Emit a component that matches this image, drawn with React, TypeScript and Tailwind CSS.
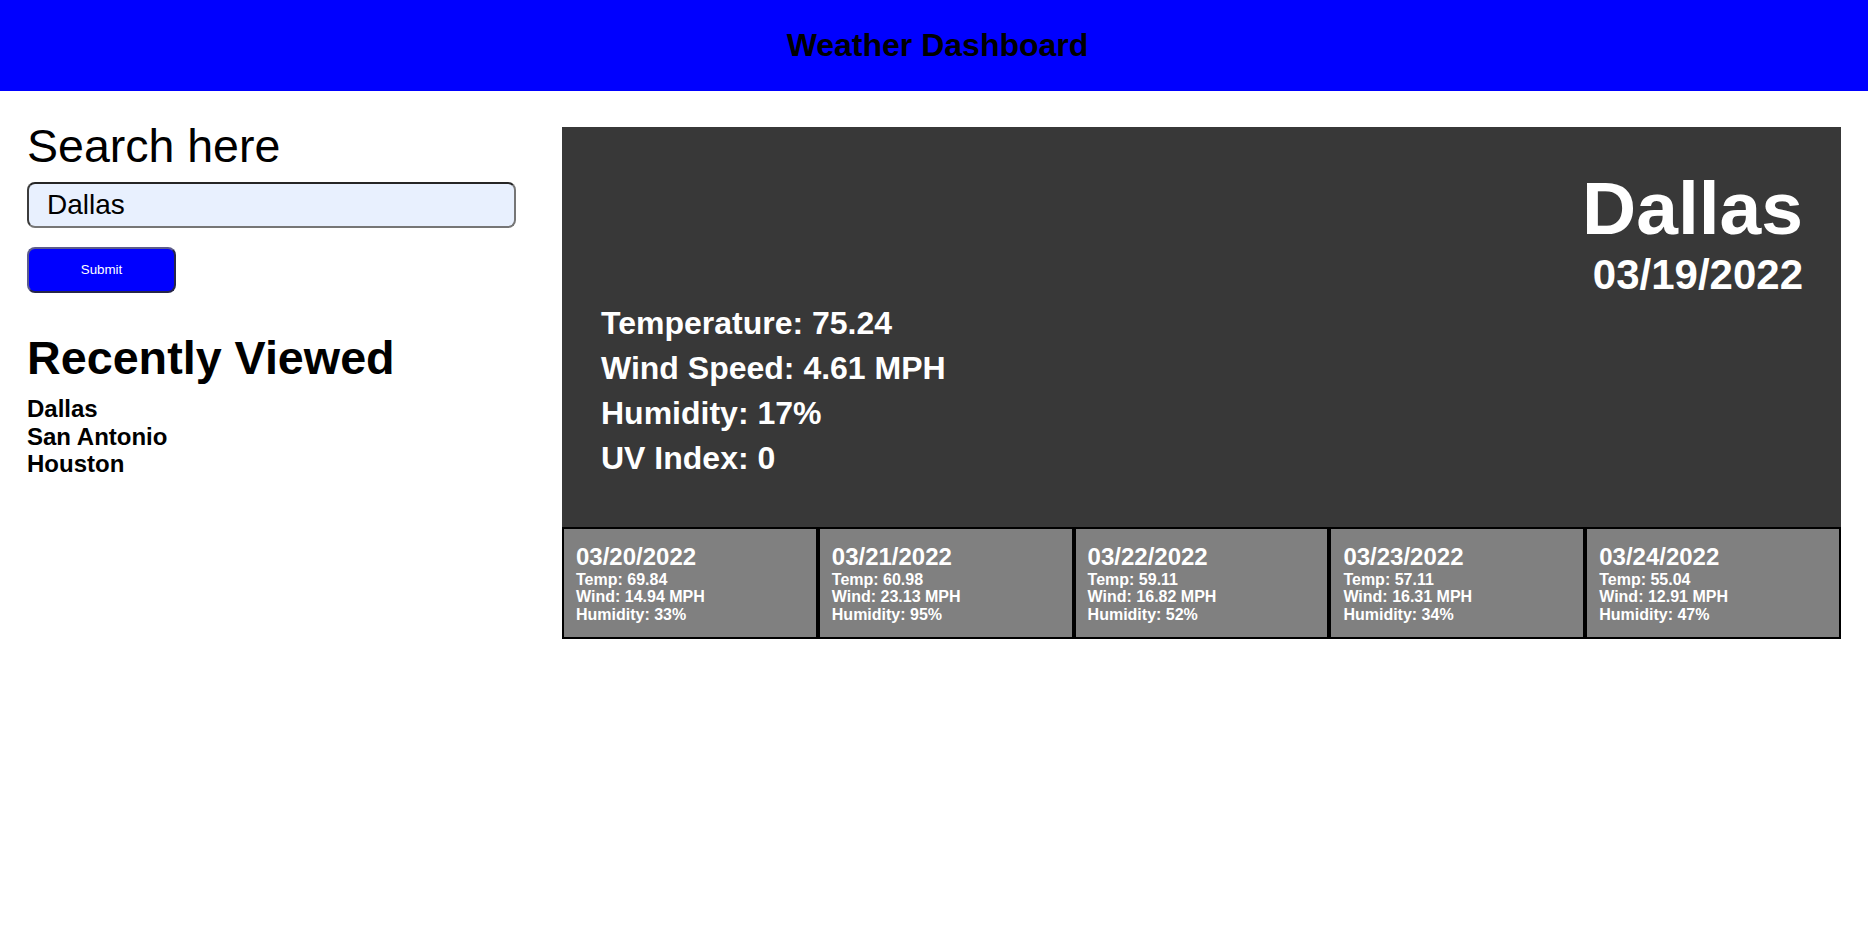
const forecast = [
  { date: "03/20/2022", temp: "69.84", wind: "14.94", humidity: "33" },
  { date: "03/21/2022", temp: "60.98", wind: "23.13", humidity: "95" },
  { date: "03/22/2022", temp: "59.11", wind: "16.82", humidity: "52" },
  { date: "03/23/2022", temp: "57.11", wind: "16.31", humidity: "34" },
  { date: "03/24/2022", temp: "55.04", wind: "12.91", humidity: "47" },
];

const recent = ["Dallas", "San Antonio", "Houston"];

function ForecastCard({ date, temp, wind, humidity }: (typeof forecast)[number]) {
  return (
    <div className="border-2 border-black bg-[#808080] px-[12px] py-[14px] font-bold text-white">
      <h3 className="text-[24px] leading-[27.6px]">{date}</h3>
      <div className="text-[16px] leading-[17.5px]">
        <p>Temp: {temp}</p>
        <p>Wind: {wind} MPH</p>
        <p>Humidity: {humidity}%</p>
      </div>
    </div>
  );
}

export default function App() {
  return (
    <div className="min-h-screen bg-white font-['Liberation_Sans',Arial,sans-serif] text-black">
      <header className="flex h-[91px] items-center justify-center bg-[#0000ff] pl-[7px]">
        <h1 className="text-[32px] font-bold leading-[37px]">Weather Dashboard</h1>
      </header>

      <main className="flex gap-[46px] px-[27px]">
        {/* search + history */}
        <aside className="w-[489px] shrink-0 pt-[28px]">
          <h2 className="text-[46.5px] leading-[54px]">Search here</h2>
          <input
            defaultValue="Dallas"
            className="mt-[9px] block h-[46px] w-full rounded-[8px] border-2 border-[#767676] border-t-[#262626] border-l-[#3c3c3c] bg-[#e8f0fe] pl-[18px] text-[28px] text-black outline-none"
          />
          <button className="mt-[19px] block h-[46px] w-[149px] rounded-[8px] border-2 border-[#26264a] border-t-[#5c5c8c] border-l-[#5c5c8c] bg-[#0000ff] text-[13.33px] text-white">
            Submit
          </button>
          <h2 className="mt-[38px] text-[46.7px] font-bold leading-[54px]">Recently Viewed</h2>
          <ul className="mt-[10px] text-[24px] font-bold leading-[27.6px]">
            {recent.map((city) => (
              <li key={city}>{city}</li>
            ))}
          </ul>
        </aside>

        {/* current + 5 day */}
        <section className="flex-1 pt-[36px]">
          <div className="flex h-[400px] justify-between bg-[#383838] pt-[38px] pr-[38px] pb-[46px] pl-[39px] font-bold text-white">
            <div className="self-end text-[32px] leading-[45px]">
              <p>Temperature: 75.24</p>
              <p>Wind Speed: 4.61 MPH</p>
              <p>Humidity: 17%</p>
              <p>UV Index: 0</p>
            </div>
            <div className="text-right">
              <h2 className="text-[75px] leading-[86px]">Dallas</h2>
              <p className="text-[42px] leading-[48px]">03/19/2022</p>
            </div>
          </div>
          <div className="grid grid-cols-5">
            {forecast.map((day) => (
              <ForecastCard key={day.date} {...day} />
            ))}
          </div>
        </section>
      </main>
    </div>
  );
}
